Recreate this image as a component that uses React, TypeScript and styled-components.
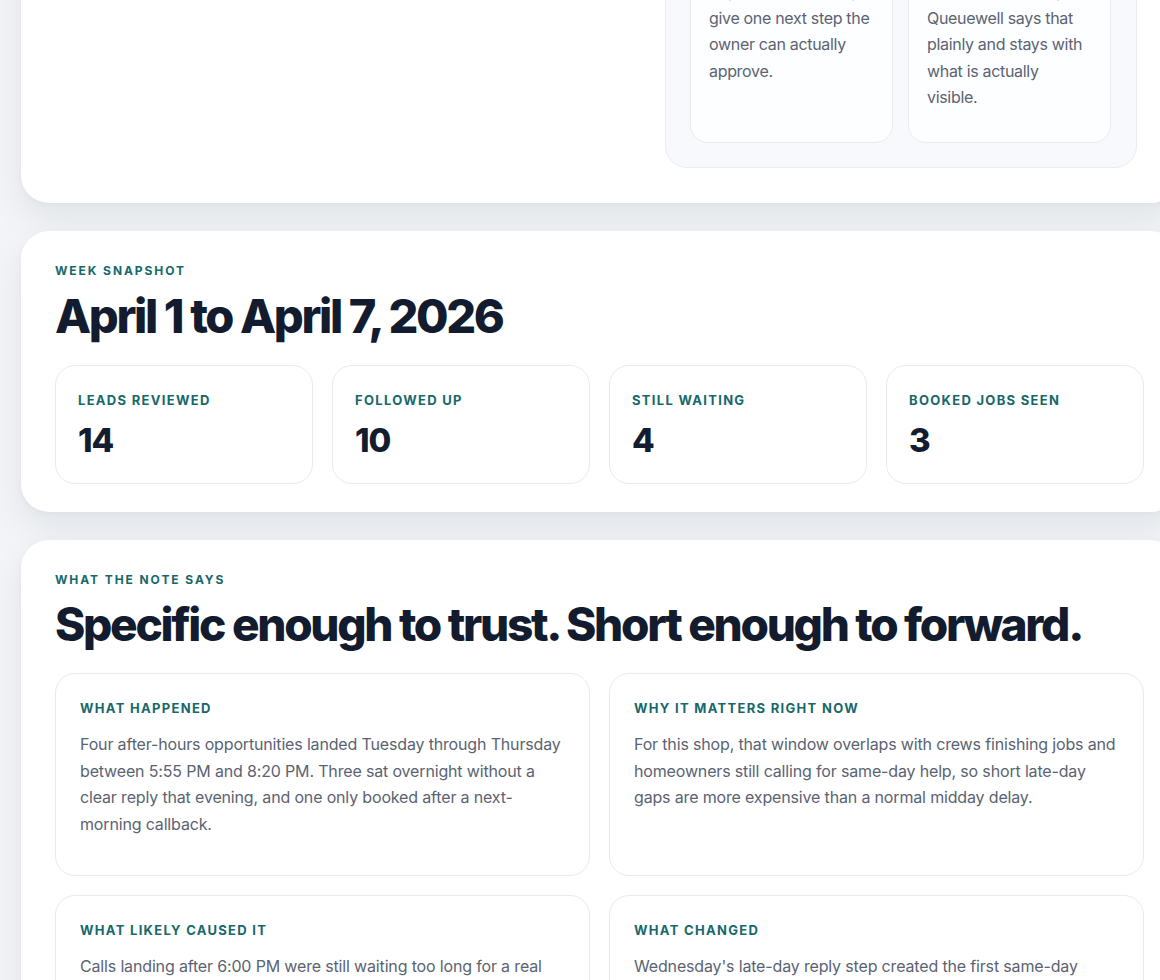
import React from "react";
import styled, { createGlobalStyle } from "styled-components";

const GlobalStyle = createGlobalStyle`
  html, body {
    margin: 0;
    padding: 0;
    background: #f2f4f7;
    overflow: hidden;
  }
  body {
    font-family: Inter, "Noto Sans", "Liberation Sans", sans-serif;
    color: #131d2f;
  }
  * { box-sizing: border-box; }
`;

const Page = styled.main`
  display: flex;
  flex-direction: column;
  gap: 28px;
  width: 1178px;
  padding-left: 21px;
  margin-top: -135px;
  padding-bottom: 40px;
`;

const Card = styled.section`
  width: 1157px;
  background: #ffffff;
  border-radius: 28px;
  box-shadow: 0 16px 36px rgba(15, 23, 42, 0.07), 0 2px 6px rgba(15, 23, 42, 0.03);
  padding: 32px 34px 28px;
`;

const TopCard = styled(Card)`
  display: grid;
  grid-template-columns: 1fr 472px;
  gap: 40px;
  padding: 34px 41px 35px 34px;
  align-items: start;
`;

const Eyebrow = styled.div`
  font-size: 12px;
  line-height: 16px;
  font-weight: 700;
  letter-spacing: 0.16em;
  text-transform: uppercase;
  color: #17686b;
`;

const Title = styled.h2<{ $size: number }>`
  margin: 12px 0 0;
  font-size: ${(p) => p.$size}px;
  line-height: 1.05;
  font-weight: 800;
  letter-spacing: -0.05em;
  color: #121c2e;
`;

const Panel = styled.div`
  background: #f7f9fc;
  border: 1px solid #e9edf2;
  border-radius: 22px;
  padding: 24px 25px 24px 24px;
  display: grid;
  grid-template-columns: 1fr 1fr;
  gap: 15px;
`;

const InnerCard = styled.div`
  background: #fdfeff;
  border: 1px solid #e8ecf1;
  border-radius: 18px;
  padding: 22px 20px 31px 18px;
`;

const Label = styled.div`
  font-size: 13px;
  line-height: 17px;
  font-weight: 700;
  letter-spacing: 0.1em;
  text-transform: uppercase;
  color: #17686b;
`;

const Body = styled.p<{ $tight?: boolean }>`
  margin: 14px 0 0;
  font-size: 16px;
  line-height: 26.5px;
  color: #5b6372;
  letter-spacing: ${(p) => (p.$tight ? "-0.02em" : "-0.01em")};
`;

const StatGrid = styled.div`
  margin-top: 25px;
  display: grid;
  grid-template-columns: repeat(4, 1fr);
  gap: 19px;
`;

const StatCard = styled.div`
  border: 1px solid #e7eaef;
  border-radius: 20px;
  padding: 26px 22px 26px;
  background: #ffffff;
`;

const StatValue = styled.div`
  margin-top: 14px;
  font-size: 33px;
  line-height: 34px;
  font-weight: 800;
  letter-spacing: -0.03em;
  color: #131d2f;
`;

const NoteGrid = styled.div`
  margin-top: 25px;
  display: grid;
  grid-template-columns: 1fr 1fr;
  gap: 19px;
`;

const NoteCard = styled.div`
  border: 1px solid #e7eaef;
  border-radius: 20px;
  padding: 26px 24px 38px;
  background: #ffffff;
`;

const stats = [
  { label: "Leads reviewed", value: "14" },
  { label: "Followed up", value: "10" },
  { label: "Still waiting", value: "4" },
  { label: "Booked jobs seen", value: "3" },
];

const notes = [
  {
    label: "What happened",
    text: "Four after-hours opportunities landed Tuesday through Thursday between 5:55 PM and 8:20 PM. Three sat overnight without a clear reply that evening, and one only booked after a next-morning callback.",
  },
  {
    label: "Why it matters right now",
    text: "For this shop, that window overlaps with crews finishing jobs and homeowners still calling for same-day help, so short late-day gaps are more expensive than a normal midday delay.",
  },
  {
    label: "What likely caused it",
    text: "Calls landing after 6:00 PM were still waiting too long for a real reply, because the office had already wrapped up and nobody owned the evening inbox.",
  },
  {
    label: "What changed",
    text: "Wednesday's late-day reply step created the first same-day booking from an evening lead, which suggests the gap closes quickly once someone owns it.",
  },
];

export default function App() {
  return (
    <>
      <GlobalStyle />
      <Page>
        <TopCard>
          <div>
            <Eyebrow>How the weekly note works</Eyebrow>
            <Title $size={40}>Built to be forwarded.</Title>
          </div>
          <Panel>
            <InnerCard>
              <Label>Keeps it useful</Label>
              <Body $tight>Say what looks likely, give one next step the owner can actually approve.</Body>
            </InnerCard>
            <InnerCard>
              <Label>Keeps it honest</Label>
              <Body $tight>When data is noisy, Queuewell says that plainly and stays with what is actually visible.</Body>
            </InnerCard>
          </Panel>
        </TopCard>

        <Card>
          <Eyebrow>Week snapshot</Eyebrow>
          <Title $size={47}>April 1 to April 7, 2026</Title>
          <StatGrid>
            {stats.map((s) => (
              <StatCard key={s.label}>
                <Label>{s.label}</Label>
                <StatValue>{s.value}</StatValue>
              </StatCard>
            ))}
          </StatGrid>
        </Card>

        <Card>
          <Eyebrow>What the note says</Eyebrow>
          <Title $size={46}>Specific enough to trust. Short enough to forward.</Title>
          <NoteGrid>
            {notes.map((n) => (
              <NoteCard key={n.label}>
                <Label>{n.label}</Label>
                <Body>{n.text}</Body>
              </NoteCard>
            ))}
          </NoteGrid>
        </Card>
      </Page>
    </>
  );
}
